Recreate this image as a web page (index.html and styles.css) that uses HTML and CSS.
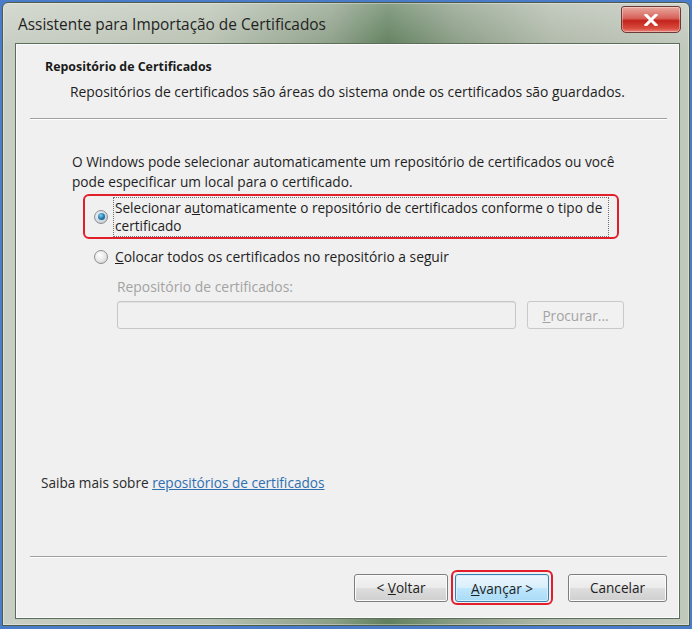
FILE: index.html
```html
<!DOCTYPE html>
<html lang="pt">
<head>
<meta charset="utf-8">
<title>Assistente para Importação de Certificados</title>
<link rel="stylesheet" href="styles.css">
</head>
<body>
<div class="window">
  <div class="titlebar">
    <span class="title">Assistente para Importação de Certificados</span>
    <div class="close">
      <svg width="16" height="12" viewBox="0 0 16 12"><path d="M3 1 L13 11 M13 1 L3 11" stroke="#fff" stroke-width="3" stroke-linecap="square"/></svg>
    </div>
  </div>
  <div class="panel">
    <div class="header">
      <div class="h-title">Repositório de Certificados</div>
      <div class="h-sub">Repositórios de certificados são áreas do sistema onde os certificados são guardados.</div>
    </div>
    <div class="rule"></div>
    <div class="body">
      <p class="intro">O Windows pode selecionar automaticamente um repositório de certificados ou você<br>pode especificar um local para o certificado.</p>
      <div class="opt opt-sel">
        <span class="radio checked"></span>
        <span class="focus">Selecionar a<u>u</u>tomaticamente o repositório de certificados conforme o tipo de<br>certificado</span>
      </div>
      <div class="opt opt2">
        <span class="radio"></span>
        <span class="label"><u>C</u>olocar todos os certificados no repositório a seguir</span>
      </div>
      <div class="store">
        <div class="store-label">Repositório de certificados:</div>
        <div class="store-row">
          <div class="textbox"></div>
          <div class="btn disabled"><span><u>P</u>rocurar...</span></div>
        </div>
      </div>
    </div>
    <div class="more">Saiba mais sobre <a href="#">repositórios de certificados</a></div>
    <div class="rule"></div>
    <div class="buttons">
      <div class="btn nav back"><span>&lt; <u>V</u>oltar</span></div>
      <div class="hl"><div class="btn nav primary"><span><u>A</u>vançar &gt;</span></div></div>
      <div class="btn nav cancel"><span>Cancelar</span></div>
    </div>
  </div>
</div>
</body>
</html>
```
FILE: styles.css
```css
html, body {
  margin: 0;
  padding: 0;
}
body {
  width: 692px;
  height: 629px;
  background: #4a7cc9;
  padding: 2px 2px 3px 2px;
  box-sizing: border-box;
  font-family: "Open Sans", "Noto Sans", sans-serif;
  color: #1e1e1e;
}
.window {
  height: 100%;
  display: flex;
  flex-direction: column;
  padding: 0 9px 6px 12px;
  box-sizing: border-box;
  background:
    linear-gradient(to bottom, rgba(255,255,255,0.25), rgba(255,255,255,0) 45px),
    linear-gradient(to right, #c8cec3 0%, #b9c2b3 30%, #8d9f88 48%, #61805e 56%, #8a9c85 66%, #b0b9aa 80%, #c1c8bc 100%);
  border: 1px solid #4d5b4b;
  border-radius: 6px 6px 0 0;
  box-shadow: inset 0 0 0 1px rgba(255,255,255,0.35);
}
.titlebar {
  height: 40px;
  display: flex;
  justify-content: space-between;
  align-items: flex-start;
  flex: none;
}
.title {
  font-size: 15.4px;
  line-height: 20px;
  margin-top: 12px;
  margin-left: 3px;
  color: #1f1f1f;
}
.close {
  width: 58px;
  height: 25px;
  margin-top: 3px;
  margin-right: -1px;
  border: 1px solid #6b3a36;
  border-radius: 3px 3px 5px 5px;
  background: linear-gradient(to bottom, #e8a99f 0%, #d7625a 45%, #c3231b 55%, #d84a3d 85%, #e9877a 100%);
  display: flex;
  align-items: center;
  justify-content: center;
  box-shadow: inset 0 0 0 1px rgba(255,255,255,0.35);
}
.panel {
  flex: 1;
  background: #f0f0f0;
  border: 1px solid #5c6e59;
  box-shadow: inset 0 0 0 1px #fbfbfb;
  display: flex;
  flex-direction: column;
  font-size: 13.8px;
}
.header {
  padding-top: 15px;
  height: 74px;
  box-sizing: border-box;
}
.h-title {
  font-weight: 700;
  font-size: 12.4px;
  line-height: 16px;
  padding-left: 29px;
  color: #1a1a1a;
}
.h-sub {
  padding-left: 54px;
  margin-top: 8px;
  line-height: 18px;
  font-size: 13.9px;
}
.rule {
  flex: none;
  height: 0;
  border-top: 1px solid #a0a0a0;
  border-bottom: 1px solid #ffffff;
  margin: 0 12px 0 14px;
}
.body {
  padding: 32px 0 0 56px;
  flex: 1;
}
.intro {
  margin: 0;
  line-height: 20px;
  font-size: 13.7px;
}
.opt {
  display: flex;
  align-items: center;
}
.opt-sel {
  margin-top: 2px;
  margin-left: 11px;
  width: 536px;
  height: 45px;
  border: 2px solid #e21e2b;
  border-radius: 6px;
  box-sizing: border-box;
  padding-left: 9px;
}
.opt-sel .focus {
  border: 1px dotted #707070;
  padding: 1px 1px;
  line-height: 18px;
  margin-left: 5px;
  flex: 1;
  margin-right: 8px;
  font-size: 13.6px;
  white-space: nowrap;
}
.radio {
  width: 12px;
  height: 12px;
  border-radius: 50%;
  border: 1px solid #8d8e8e;
  background: radial-gradient(circle at 40% 35%, #ffffff 0%, #e6e6e6 55%, #c9c9c9 100%);
  flex: none;
  display: flex;
  align-items: center;
  justify-content: center;
}
.radio.checked {
  background: radial-gradient(circle at 40% 35%, #f3f6f9 0%, #cfd8e0 60%, #b3bfcb 100%);
}
.radio.checked::after {
  content: "";
  width: 7px;
  height: 7px;
  border-radius: 50%;
  background: radial-gradient(circle at 40% 35%, #8ad0f0 0%, #2a85b8 45%, #0b3f66 100%);
}
.opt2 {
  margin-top: 9px;
  margin-left: 22px;
  line-height: 18px;
}
.opt2 .label {
  margin-left: 7px;
}
.store {
  margin-left: 45px;
  margin-top: 12px;
  color: #a3a3a3;
}
.store-label {
  font-size: 13.9px;
  line-height: 18px;
}
.store-row {
  display: flex;
  gap: 11px;
  margin-top: 5px;
}
.textbox {
  width: 399px;
  height: 28px;
  box-sizing: border-box;
  border: 1px solid #c6c6c6;
  border-radius: 3px;
  background: #f0f0f0;
  box-shadow: inset 0 1px 0 #e2e2e2;
}
.btn {
  display: flex;
  align-items: center;
  justify-content: center;
  border: 1px solid #8a8a8a;
  border-radius: 3px;
  box-sizing: border-box;
  font-size: 13.6px;
}
.btn.disabled {
  width: 97px;
  height: 28px;
  border-color: #c9c9c9;
  color: #a3a3a3;
  background: #f1f1f1;
}
.more {
  padding-left: 25px;
  margin-bottom: 64px;
  color: #2a2a2a;
  font-size: 13.6px;
  line-height: 18px;
}
.more a {
  color: #2f6fb0;
  text-decoration: underline;
}
.buttons {
  display: flex;
  justify-content: flex-end;
  align-items: center;
  padding: 12px 12px 13px 0;
}
.btn.nav {
  width: 94px;
  height: 28px;
  background: linear-gradient(to bottom, #f4f4f4 0%, #ebebeb 48%, #dddddd 52%, #cfcfcf 100%);
  border-color: #7d7d7d;
  box-shadow: inset 0 0 0 1px #fcfcfc;
}
.back {
  margin-right: 3px;
}
.hl {
  border: 2px solid #e21e2b;
  border-radius: 6px;
  padding: 2px 2px 1px;
  margin-right: 15px;
}
.btn.nav.primary {
  width: 94px;
  background: linear-gradient(to bottom, #ebf6fd 0%, #d9effc 48%, #bee6fd 52%, #a9dbf6 100%);
  border-color: #3c7fb1;
  box-shadow: inset 0 0 0 1px #d6f0fd;
}
.btn.nav.cancel {
  width: 99px;
}
```
